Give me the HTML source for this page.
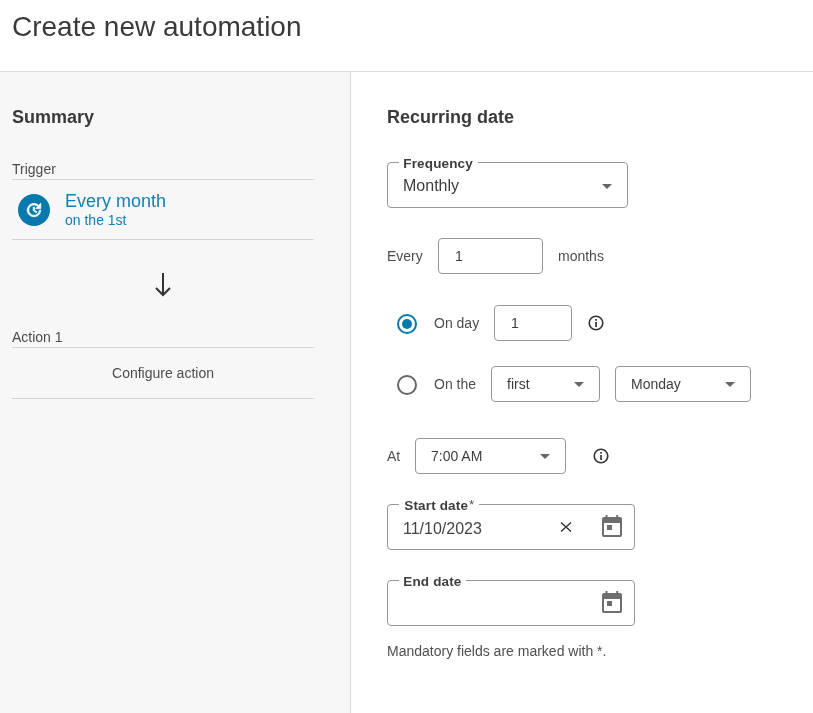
<!DOCTYPE html>
<html><head><meta charset="utf-8">
<style>
*{box-sizing:border-box;margin:0;padding:0}
html,body{width:813px;height:713px;overflow:hidden;background:#fff;font-family:"Liberation Sans",sans-serif;color:#3d3d3d}
.abs{position:absolute}
#hdr{position:absolute;left:0;top:0;width:813px;height:72px;border-bottom:1px solid #dcdcdc;background:#fff}
#title{position:absolute;will-change:transform;left:12px;top:12.5px;font-size:28px;color:#3a3a3a;white-space:nowrap;line-height:1}
#left{position:absolute;left:0;top:72px;width:351px;height:641px;background:#f7f7f7;border-right:1px solid #dcdcdc}
.t{position:absolute;white-space:nowrap;line-height:1;will-change:transform}
.hl{position:absolute;height:1px;background:#d4d4d4}
.box{position:absolute;border:1px solid #979797;border-radius:4px;background:#fff}
.lbl{position:absolute;will-change:transform;white-space:nowrap;line-height:1;font-size:13.5px;font-weight:bold;letter-spacing:.15px;color:#3d3d3d;background:#fff;padding:0 5px 0 4.3px}
.r14{font-size:14px;color:#4d4d4d}
.v14{font-size:14px;color:#3d3d3d}
svg{position:absolute;overflow:visible}
</style></head><body>
<div id="hdr"><div id="title">Create new automation</div></div>
<div id="left">
  <div class="t" style="left:12px;top:36px;font-size:18px;font-weight:bold;color:#3a3a3a">Summary</div>
  <div class="t r14" style="left:12px;top:90px">Trigger</div>
  <div class="hl" style="left:12px;top:107px;width:302px"></div>
  <div class="abs" style="left:18px;top:122px;width:32px;height:32px;border-radius:50%;background:#0779ad"></div>
  <div class="t" style="left:65px;top:120px;font-size:18px;color:#1281b2">Every month</div>
  <div class="t" style="left:65px;top:141px;font-size:14px;color:#1281b2">on the 1st</div>
  <div class="hl" style="left:12px;top:167px;width:302px"></div>
  <div class="t r14" style="left:12px;top:258px">Action 1</div>
  <div class="hl" style="left:12px;top:275px;width:302px"></div>
  <div class="t r14" style="left:0;width:326px;text-align:center;top:294px">Configure action</div>
  <div class="hl" style="left:12px;top:326px;width:302px"></div>
</div>
<!-- trigger icon (update) -->
<svg style="left:25.1px;top:200.8px" width="18" height="18" viewBox="0 0 24 24"><path fill="#fff" stroke="#fff" stroke-width="1" stroke-linejoin="round" d="M21 10.12h-6.78l2.74-2.82c-2.73-2.7-7.15-2.8-9.88-.1-2.73 2.71-2.73 7.08 0 9.79s7.15 2.71 9.88 0C18.32 15.65 19 14.08 19 12.1h2c0 1.98-.88 4.55-2.64 6.29-3.51 3.48-9.21 3.48-12.72 0-3.5-3.47-3.53-9.11-.02-12.58s9.14-3.47 12.65 0L21 3v7.12zM12.5 8v4.25l3.5 2.08-.72 1.21L11 13V8h1.5z"/></svg>
<!-- arrow down -->
<svg style="left:0;top:0" width="1" height="1"><path d="M163 273V295M156 288L163 295L170 288" fill="none" stroke="#333" stroke-width="2"/></svg>

<div class="t" style="left:387px;top:108px;font-size:18px;font-weight:bold;color:#3a3a3a">Recurring date</div>

<!-- Frequency -->
<div class="box" style="left:387px;top:162px;width:241px;height:46px"></div>
<div class="lbl" style="left:399px;top:157px">Frequency</div>
<div class="t" style="left:403px;top:178px;font-size:16px;color:#3d3d3d">Monthly</div>
<svg style="left:0;top:0" width="1" height="1"><path d="M602 184H612L607 189Z" fill="#666"/></svg>

<!-- Every -->
<div class="t r14" style="left:387px;top:249px">Every</div>
<div class="box" style="left:438px;top:238px;width:105px;height:36px"></div>
<div class="t v14" style="left:455px;top:249px">1</div>
<div class="t r14" style="left:558px;top:249px">months</div>

<!-- On day -->
<svg style="left:0;top:0" width="1" height="1"><circle cx="407" cy="324" r="9" fill="none" stroke="#0779ad" stroke-width="2"/><circle cx="407" cy="324" r="5" fill="#0779ad"/></svg>
<div class="t r14" style="left:434px;top:316px">On day</div>
<div class="box" style="left:494px;top:305px;width:78px;height:36px"></div>
<div class="t v14" style="left:511px;top:316px">1</div>
<svg style="left:0;top:0" width="1" height="1"><circle cx="596" cy="323" r="6.8" fill="none" stroke="#333" stroke-width="1.6"/><rect x="595.2" y="319" width="1.7" height="1.7" fill="#333"/><rect x="595.2" y="322" width="1.7" height="5" fill="#333"/></svg>

<!-- On the -->
<svg style="left:0;top:0" width="1" height="1"><circle cx="407" cy="385" r="9" fill="none" stroke="#666" stroke-width="2"/></svg>
<div class="t r14" style="left:434px;top:377px">On the</div>
<div class="box" style="left:491px;top:366px;width:109px;height:36px"></div>
<div class="t v14" style="left:507px;top:377px">first</div>
<svg style="left:0;top:0" width="1" height="1"><path d="M574 382H584L579 387Z" fill="#666"/></svg>
<div class="box" style="left:615px;top:366px;width:136px;height:36px"></div>
<div class="t v14" style="left:631px;top:377px">Monday</div>
<svg style="left:0;top:0" width="1" height="1"><path d="M725 382H735L730 387Z" fill="#666"/></svg>

<!-- At -->
<div class="t r14" style="left:387px;top:449px">At</div>
<div class="box" style="left:415px;top:438px;width:151px;height:36px"></div>
<div class="t v14" style="left:431px;top:449px">7:00 AM</div>
<svg style="left:0;top:0" width="1" height="1"><path d="M540 454H550L545 459Z" fill="#666"/></svg>
<svg style="left:0;top:0" width="1" height="1"><circle cx="601" cy="456" r="6.8" fill="none" stroke="#333" stroke-width="1.6"/><rect x="600.2" y="452" width="1.7" height="1.7" fill="#333"/><rect x="600.2" y="455" width="1.7" height="5" fill="#333"/></svg>

<!-- Start date -->
<div class="box" style="left:387px;top:504px;width:248px;height:46px"></div>
<div class="lbl" style="left:399px;top:499px;padding-left:5.3px">Start date<span style="font-weight:normal;color:#555;letter-spacing:0;margin-left:1px;position:relative;top:-1px">*</span></div>
<div class="t" style="left:403px;top:521px;font-size:16px;color:#444">11/10/2023</div>
<svg style="left:0;top:0" width="1" height="1"><path d="M561 522.5L571 531.5M571 522.5L561 531.5" stroke="#333" stroke-width="1.4" fill="none"/></svg>
<svg style="left:0;top:0" width="1" height="1"><g fill="#6e6e6e"><rect x="602" y="517" width="20" height="20" rx="2"/><rect x="605.5" y="515" width="2" height="3"/><rect x="616.2" y="515" width="2" height="3"/></g><rect x="604" y="523" width="16" height="12" fill="#fff"/><rect x="607" y="525" width="5" height="5" fill="#6e6e6e"/></svg>

<!-- End date -->
<div class="box" style="left:387px;top:580px;width:248px;height:46px"></div>
<div class="lbl" style="left:399px;top:575px;padding-right:4.3px">End date</div>
<svg style="left:0;top:76px" width="1" height="1"><g fill="#6e6e6e"><rect x="602" y="517" width="20" height="20" rx="2"/><rect x="605.5" y="515" width="2" height="3"/><rect x="616.2" y="515" width="2" height="3"/></g><rect x="604" y="523" width="16" height="12" fill="#fff"/><rect x="607" y="525" width="5" height="5" fill="#6e6e6e"/></svg>

<div class="t" style="left:387px;top:644px;font-size:14px;color:#4f4f4f">Mandatory fields are marked with *.</div>
</body></html>
